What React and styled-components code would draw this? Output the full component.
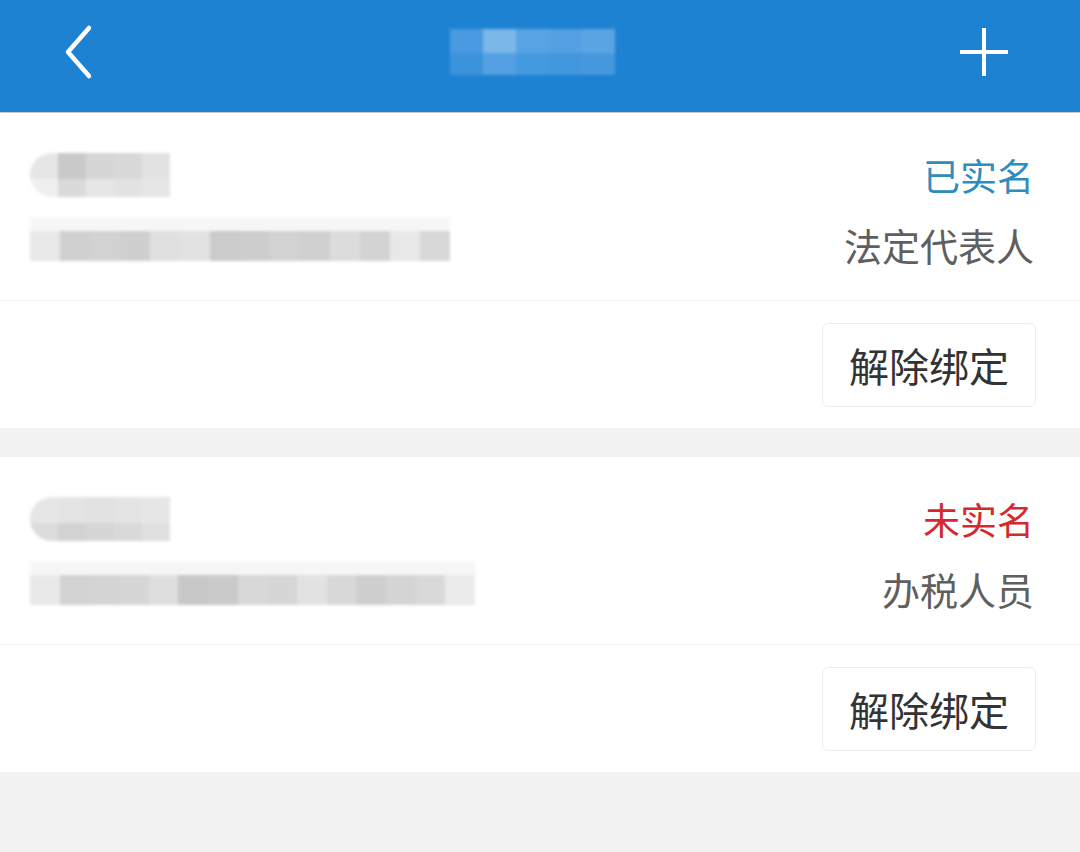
import React from 'react';
import styled, { createGlobalStyle } from 'styled-components';

const GlobalStyle = createGlobalStyle`
  html, body {
    margin: 0;
    padding: 0;
    background: #f2f2f2;
  }
  body {
    font-family: "Noto Sans CJK SC", "Noto Sans", sans-serif;
  }
`;

const accounts = [
	{
		id: 1,
		status: '已实名',
		verified: true,
		role: '法定代表人',
		name: [
			[ '#e6e6e6', '#c9c9c9', '#d6d6d6', '#d8d8d8', '#e2e2e2' ],
			[ '#efefef', '#dadada', '#e6e6e6', '#e2e2e2', '#e6e6e6' ]
		],
		code: [ '#e8e8e8', '#d0d0d0', '#d2d2d2', '#cfcfcf', '#e0e0e0', '#e2e2e2', '#cbcbcb', '#cdcdcd', '#d2d2d2', '#d0d0d0', '#dcdcdc', '#d3d3d3', '#e8e8e8', '#d8d8d8' ],
		codeWidth: 420
	},
	{
		id: 2,
		status: '未实名',
		verified: false,
		role: '办税人员',
		name: [
			[ '#e6e6e6', '#e4e4e4', '#e2e2e2', '#e4e4e4', '#e6e6e6' ],
			[ '#dcdcdc', '#d2d2d2', '#d6d6d6', '#d9d9d9', '#e0e0e0' ]
		],
		code: [ '#e8e8e8', '#d2d2d2', '#d4d4d4', '#d6d6d6', '#dedede', '#c8c8c8', '#cacaca', '#d8d8d8', '#d6d6d6', '#e2e2e2', '#d8d8d8', '#cfcfcf', '#d4d4d4', '#d9d9d9', '#ebebeb' ],
		codeWidth: 445
	}
];

const titleCells = [
	[ '#4e9de2', '#86bdec', '#5ea7e6', '#5aa4e4', '#62a8e6' ],
	[ '#3f95dd', '#5ba4e4', '#4a9ce0', '#4799df', '#4b9be0' ]
];

export default function App() {
	return (
		<Page>
			<GlobalStyle />
			<Header>
				<IconButton aria-label="back">
					<svg width="40" height="56" viewBox="0 0 40 56">
						<path d="M31 4 L10 28 L31 52" fill="none" stroke="#fff" strokeWidth="4.5" strokeLinecap="round" strokeLinejoin="round" />
					</svg>
				</IconButton>
				<TitleMosaic>
					{titleCells.map((row, r) => (
						<MosaicRow key={r} $h={r === 0 ? 24 : 22}>
							{row.map((c, i) => <Cell key={i} $w={33} $c={c} />)}
						</MosaicRow>
					))}
				</TitleMosaic>
				<IconButton aria-label="add">
					<svg width="52" height="52" viewBox="0 0 52 52">
						<path d="M26 2 V50 M2 26 H50" fill="none" stroke="#fff" strokeWidth="4" />
					</svg>
				</IconButton>
			</Header>

			{accounts.map((a) => (
				<Card key={a.id}>
					<InfoRow>
						<LeftCol>
							<Line>
								<NameMosaic>
									{a.name.map((row, r) => (
										<MosaicRow key={r} $h={r === 0 ? 26 : 18}>
											{row.map((c, i) => <Cell key={i} $w={28} $c={c} />)}
										</MosaicRow>
									))}
								</NameMosaic>
							</Line>
							<Line>
								<CodeMosaic style={{ width: a.codeWidth }}>
									{a.code.map((c, i) => <Cell key={i} $w={a.codeWidth / a.code.length} $c={c} />)}
								</CodeMosaic>
							</Line>
						</LeftCol>
						<RightCol>
							<Status $verified={a.verified}>{a.status}</Status>
							<Role>{a.role}</Role>
						</RightCol>
					</InfoRow>
					<ActionRow>
						<UnbindButton>解除绑定</UnbindButton>
					</ActionRow>
				</Card>
			))}
		</Page>
	);
}

const Page = styled.div`
  min-height: 852px;
  background: #f2f2f2;
  display: flex;
  flex-direction: column;
  gap: 29px;
`;

const Header = styled.header`
  height: 112px;
  background: #1e82d2;
  box-shadow: 0 1px 2px rgba(0, 0, 0, 0.25);
  display: flex;
  align-items: center;
  justify-content: space-between;
  padding: 0 70px 8px 58px;
  box-sizing: border-box;
  margin-bottom: -28px;
`;

const IconButton = styled.div`
  display: flex;
  align-items: center;
  justify-content: center;
`;

const TitleMosaic = styled.div`
  display: flex;
  flex-direction: column;
  margin-left: 8px;
  filter: blur(1.5px);
  opacity: 0.9;
`;

const MosaicRow = styled.div`
  display: flex;
  height: ${(p) => p.$h}px;
`;

const Cell = styled.div`
  width: ${(p) => p.$w}px;
  height: 100%;
  background: ${(p) => p.$c};
`;

const Card = styled.section`
  background: #fff;
  display: flex;
  flex-direction: column;
`;

const InfoRow = styled.div`
  display: flex;
  justify-content: space-between;
  padding: 37px 46px 30px 30px;
  border-bottom: 1px solid #f0f0f0;
`;

const LeftCol = styled.div`
  display: flex;
  flex-direction: column;
  gap: 20px;
`;

const Line = styled.div`
  height: 50px;
  display: flex;
  align-items: center;
`;

const NameMosaic = styled.div`
  display: flex;
  flex-direction: column;
  border-radius: 22px 0 0 22px;
  overflow: hidden;
  filter: blur(1.5px);
`;

const CodeMosaic = styled.div`
  display: flex;
  height: 30px;
  margin-top: 2px;
  box-shadow: 0 -14px 0 #f6f6f6;
  filter: blur(1.5px);
`;

const RightCol = styled.div`
  display: flex;
  flex-direction: column;
  align-items: flex-end;
  gap: 20px;
`;

const Status = styled.div`
  height: 50px;
  line-height: 50px;
  font-size: 37px;
  color: ${(p) => (p.$verified ? '#2f8dbd' : '#d42a2e')};
`;

const Role = styled.div`
  height: 50px;
  line-height: 50px;
  font-size: 38px;
  color: #5f5f5f;
`;

const ActionRow = styled.div`
  display: flex;
  justify-content: flex-end;
  padding: 22px 44px 21px 0;
`;

const UnbindButton = styled.button`
  width: 214px;
  height: 84px;
  background: #fff;
  border: 1px solid #ececec;
  border-radius: 6px;
  font-family: "Noto Sans CJK SC", "Noto Sans", sans-serif;
  font-size: 40px;
  color: #333;
  padding: 0;
  cursor: pointer;
`;
